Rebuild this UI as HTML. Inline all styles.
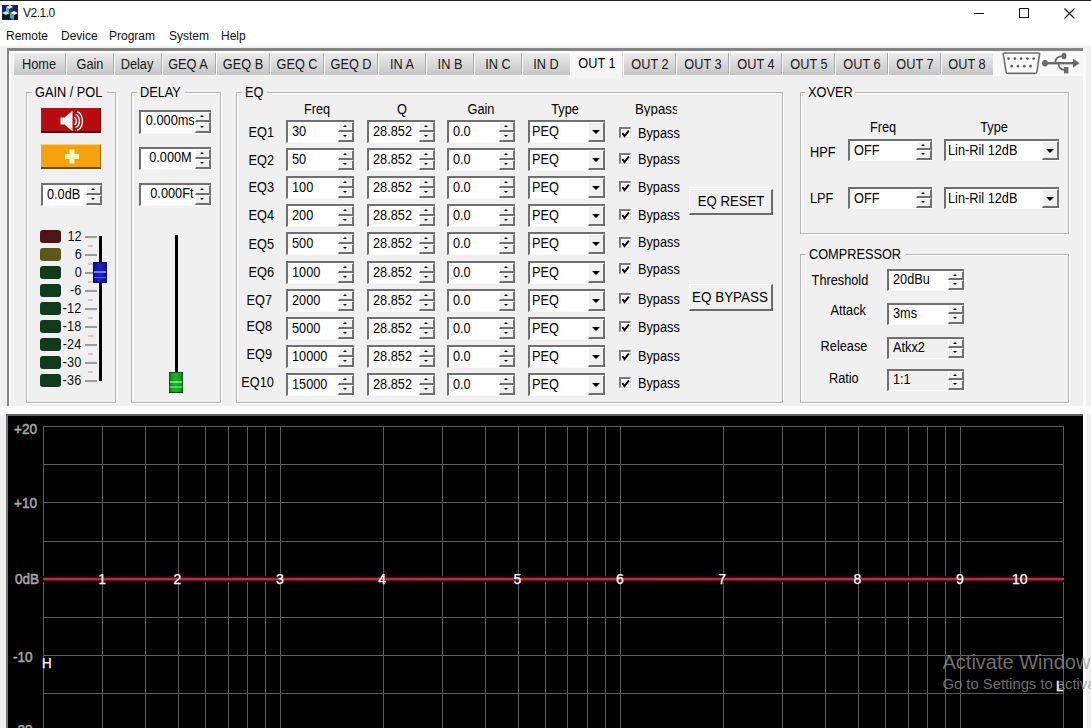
<!DOCTYPE html><html><head><meta charset="utf-8"><style>
html,body{margin:0;padding:0;}
body{width:1091px;height:728px;position:relative;overflow:hidden;background:#f0f0f0;font-family:"Liberation Sans", sans-serif;}
.a{position:absolute;box-sizing:border-box;}
.t{position:absolute;white-space:nowrap;}
.grp{border:1px solid #b4b4b4;box-shadow:inset 1px 1px 0 #fff, 1px 1px 0 #fff;}
.sunk{border-style:solid;border-width:2px;border-color:#7a7a7a #e8e8e8 #e8e8e8 #7a7a7a;}
.rais{background:#f0f0f0;border-style:solid;border-width:1px 2px 2px 1px;border-color:#fff #808080 #808080 #fff;}
.tri-up{width:0;height:0;border-left:2.5px solid transparent;border-right:2.5px solid transparent;border-bottom:2.5px solid #000;}
.sbtn{background:#f0f0f0;border-style:solid;border-width:1px 2px 2px 1px;border-color:#fff #707070 #707070 #fff;}
.tri-dn{width:0;height:0;border-left:2.5px solid transparent;border-right:2.5px solid transparent;border-top:2.5px solid #000;}
.tri-dn2{width:0;height:0;border-left:4px solid transparent;border-right:4px solid transparent;border-top:4.5px solid #000;}
.btn{background:#f0f0f0;border-style:solid;border-width:1px 2px 2px 1px;border-color:#fff #6a6a6a #6a6a6a #fff;}
.chk{background:#fff;border-style:solid;border-width:2px 1px 1px 2px;border-color:#7a7a7a #e0e0e0 #e0e0e0 #7a7a7a;}
</style></head><body>
<div class="a" style="left:0px;top:0px;width:1091px;height:26px;background:#fff;"></div>
<div class="a" style="left:0px;top:0px;width:1091px;height:1px;background:#222;"></div>
<svg class="a" style="left:2px;top:5px" width="16" height="15" viewBox="0 0 16 15">
<rect x="0" y="0" width="16" height="15" fill="#1a1a8a"/>
<polygon points="4,2 8,0 11,2 11,8 7,10 4,8" fill="#1b3b3b"/>
<polygon points="4,2 8,0 11,2 7,4" fill="#cfeeee"/>
<polygon points="4,2 7,4 7,10 4,8" fill="#5fb0b0"/>
<polygon points="0,8 4,6 8,8 8,14 4,15 0,13" fill="#0a1a1a"/>
<polygon points="0,8 4,6 8,8 4,10" fill="#bfe8e8"/>
<polygon points="8,8 12,6 16,8 16,14 12,15 8,13" fill="#0a1a1a"/>
<polygon points="8,8 12,6 16,8 12,10" fill="#e8ffff"/>
<polygon points="8,8 12,10 12,15 8,13" fill="#5aa0a0"/>
</svg>
<div class="t" style="left:23px;top:6.60px;font-size:12px;line-height:12px;color:#111;transform-origin:0 0;letter-spacing:-0.5px;">V2.1.0</div>
<div class="a" style="left:974px;top:13px;width:10px;height:1px;background:#111;"></div>
<div class="a" style="left:1019px;top:8px;width:10px;height:10px;border:1px solid #111;"></div>
<svg class="a" style="left:1064px;top:8px" width="11" height="11" viewBox="0 0 11 11"><path d="M0.5 0.5 L10.5 10.5 M10.5 0.5 L0.5 10.5" stroke="#111" stroke-width="1.1"/></svg>
<div class="a" style="left:0px;top:26px;width:1091px;height:18px;background:#fff;"></div>
<div class="a" style="left:0px;top:44px;width:1091px;height:4px;background:linear-gradient(#fff,#f0f0f0);"></div>
<div class="t" style="left:6px;top:30.10px;font-size:12px;line-height:12px;color:#111;transform-origin:0 0;">Remote</div>
<div class="t" style="left:61px;top:30.10px;font-size:12px;line-height:12px;color:#111;transform-origin:0 0;">Device</div>
<div class="t" style="left:109px;top:30.10px;font-size:12px;line-height:12px;color:#111;transform-origin:0 0;">Program</div>
<div class="t" style="left:169px;top:30.10px;font-size:12px;line-height:12px;color:#111;transform-origin:0 0;">System</div>
<div class="t" style="left:221px;top:30.10px;font-size:12px;line-height:12px;color:#111;transform-origin:0 0;">Help</div>
<div class="a" style="left:7px;top:48px;width:1078px;height:358px;background:#f0f0f0;border-top:3px solid #858585;border-left:2px solid #858585;"></div>
<div class="a" style="left:9px;top:51px;width:1074px;height:2px;background:#fff;"></div>
<div class="a" style="left:9px;top:51px;width:2px;height:355px;background:#fff;"></div>
<div class="a" style="left:1083px;top:48px;width:3px;height:680px;background:#fcfcfc;"></div>
<div class="a" style="left:0px;top:406px;width:1091px;height:8px;background:#fcfcfc;"></div>
<div class="a" style="left:13px;top:53px;width:53px;height:22px;background:linear-gradient(#ececec,#c6c6c6);border-left:1px solid #fff;"></div>
<div class="t" style="left:-61.5px;width:200px;text-align:center;top:56.78px;font-size:14px;line-height:14px;color:#1a1a1a;transform:scaleX(0.91);transform-origin:50% 0;">Home</div>
<div class="a" style="left:66px;top:53px;width:48px;height:22px;background:linear-gradient(#ececec,#c6c6c6);border-left:1px solid #fff;"></div>
<div class="a" style="left:65px;top:53px;width:1px;height:20px;background:#a8a8a8;"></div>
<div class="t" style="left:-10.0px;width:200px;text-align:center;top:56.78px;font-size:14px;line-height:14px;color:#1a1a1a;transform:scaleX(0.91);transform-origin:50% 0;">Gain</div>
<div class="a" style="left:114px;top:53px;width:48px;height:22px;background:linear-gradient(#ececec,#c6c6c6);border-left:1px solid #fff;"></div>
<div class="a" style="left:113px;top:53px;width:1px;height:20px;background:#a8a8a8;"></div>
<div class="t" style="left:37.0px;width:200px;text-align:center;top:56.78px;font-size:14px;line-height:14px;color:#1a1a1a;transform:scaleX(0.91);transform-origin:50% 0;">Delay</div>
<div class="a" style="left:162px;top:53px;width:54px;height:22px;background:linear-gradient(#ececec,#c6c6c6);border-left:1px solid #fff;"></div>
<div class="a" style="left:161px;top:53px;width:1px;height:20px;background:#a8a8a8;"></div>
<div class="t" style="left:88.0px;width:200px;text-align:center;top:56.78px;font-size:14px;line-height:14px;color:#1a1a1a;transform:scaleX(0.91);transform-origin:50% 0;">GEQ A</div>
<div class="a" style="left:216px;top:53px;width:54px;height:22px;background:linear-gradient(#ececec,#c6c6c6);border-left:1px solid #fff;"></div>
<div class="a" style="left:215px;top:53px;width:1px;height:20px;background:#a8a8a8;"></div>
<div class="t" style="left:143.0px;width:200px;text-align:center;top:56.78px;font-size:14px;line-height:14px;color:#1a1a1a;transform:scaleX(0.91);transform-origin:50% 0;">GEQ B</div>
<div class="a" style="left:270px;top:53px;width:54px;height:22px;background:linear-gradient(#ececec,#c6c6c6);border-left:1px solid #fff;"></div>
<div class="a" style="left:269px;top:53px;width:1px;height:20px;background:#a8a8a8;"></div>
<div class="t" style="left:197.0px;width:200px;text-align:center;top:56.78px;font-size:14px;line-height:14px;color:#1a1a1a;transform:scaleX(0.91);transform-origin:50% 0;">GEQ C</div>
<div class="a" style="left:324px;top:53px;width:54px;height:22px;background:linear-gradient(#ececec,#c6c6c6);border-left:1px solid #fff;"></div>
<div class="a" style="left:323px;top:53px;width:1px;height:20px;background:#a8a8a8;"></div>
<div class="t" style="left:251.0px;width:200px;text-align:center;top:56.78px;font-size:14px;line-height:14px;color:#1a1a1a;transform:scaleX(0.91);transform-origin:50% 0;">GEQ D</div>
<div class="a" style="left:378px;top:53px;width:48px;height:22px;background:linear-gradient(#ececec,#c6c6c6);border-left:1px solid #fff;"></div>
<div class="a" style="left:377px;top:53px;width:1px;height:20px;background:#a8a8a8;"></div>
<div class="t" style="left:302.0px;width:200px;text-align:center;top:56.78px;font-size:14px;line-height:14px;color:#1a1a1a;transform:scaleX(0.91);transform-origin:50% 0;">IN A</div>
<div class="a" style="left:426px;top:53px;width:48px;height:22px;background:linear-gradient(#ececec,#c6c6c6);border-left:1px solid #fff;"></div>
<div class="a" style="left:425px;top:53px;width:1px;height:20px;background:#a8a8a8;"></div>
<div class="t" style="left:350.0px;width:200px;text-align:center;top:56.78px;font-size:14px;line-height:14px;color:#1a1a1a;transform:scaleX(0.91);transform-origin:50% 0;">IN B</div>
<div class="a" style="left:474px;top:53px;width:48px;height:22px;background:linear-gradient(#ececec,#c6c6c6);border-left:1px solid #fff;"></div>
<div class="a" style="left:473px;top:53px;width:1px;height:20px;background:#a8a8a8;"></div>
<div class="t" style="left:398.0px;width:200px;text-align:center;top:56.78px;font-size:14px;line-height:14px;color:#1a1a1a;transform:scaleX(0.91);transform-origin:50% 0;">IN C</div>
<div class="a" style="left:522px;top:53px;width:48px;height:22px;background:linear-gradient(#ececec,#c6c6c6);border-left:1px solid #fff;"></div>
<div class="a" style="left:521px;top:53px;width:1px;height:20px;background:#a8a8a8;"></div>
<div class="t" style="left:446.0px;width:200px;text-align:center;top:56.78px;font-size:14px;line-height:14px;color:#1a1a1a;transform:scaleX(0.91);transform-origin:50% 0;">IN D</div>
<div class="a" style="left:570px;top:51px;width:53px;height:27px;background:linear-gradient(#fafafa,#f4f4f4);border-left:1px solid #fff;border-right:1px solid #d8d8d8;"></div>
<div class="t" style="left:496.5px;width:200px;text-align:center;top:55.78px;font-size:14px;line-height:14px;color:#000;transform:scaleX(0.91);transform-origin:50% 0;">OUT 1</div>
<div class="a" style="left:623px;top:53px;width:53px;height:22px;background:linear-gradient(#ececec,#c6c6c6);border-left:1px solid #fff;"></div>
<div class="t" style="left:549.5px;width:200px;text-align:center;top:56.78px;font-size:14px;line-height:14px;color:#1a1a1a;transform:scaleX(0.91);transform-origin:50% 0;">OUT 2</div>
<div class="a" style="left:676px;top:53px;width:53px;height:22px;background:linear-gradient(#ececec,#c6c6c6);border-left:1px solid #fff;"></div>
<div class="a" style="left:675px;top:53px;width:1px;height:20px;background:#a8a8a8;"></div>
<div class="t" style="left:602.5px;width:200px;text-align:center;top:56.78px;font-size:14px;line-height:14px;color:#1a1a1a;transform:scaleX(0.91);transform-origin:50% 0;">OUT 3</div>
<div class="a" style="left:729px;top:53px;width:53px;height:22px;background:linear-gradient(#ececec,#c6c6c6);border-left:1px solid #fff;"></div>
<div class="a" style="left:728px;top:53px;width:1px;height:20px;background:#a8a8a8;"></div>
<div class="t" style="left:655.5px;width:200px;text-align:center;top:56.78px;font-size:14px;line-height:14px;color:#1a1a1a;transform:scaleX(0.91);transform-origin:50% 0;">OUT 4</div>
<div class="a" style="left:782px;top:53px;width:53px;height:22px;background:linear-gradient(#ececec,#c6c6c6);border-left:1px solid #fff;"></div>
<div class="a" style="left:781px;top:53px;width:1px;height:20px;background:#a8a8a8;"></div>
<div class="t" style="left:708.5px;width:200px;text-align:center;top:56.78px;font-size:14px;line-height:14px;color:#1a1a1a;transform:scaleX(0.91);transform-origin:50% 0;">OUT 5</div>
<div class="a" style="left:835px;top:53px;width:53px;height:22px;background:linear-gradient(#ececec,#c6c6c6);border-left:1px solid #fff;"></div>
<div class="a" style="left:834px;top:53px;width:1px;height:20px;background:#a8a8a8;"></div>
<div class="t" style="left:761.5px;width:200px;text-align:center;top:56.78px;font-size:14px;line-height:14px;color:#1a1a1a;transform:scaleX(0.91);transform-origin:50% 0;">OUT 6</div>
<div class="a" style="left:888px;top:53px;width:53px;height:22px;background:linear-gradient(#ececec,#c6c6c6);border-left:1px solid #fff;"></div>
<div class="a" style="left:887px;top:53px;width:1px;height:20px;background:#a8a8a8;"></div>
<div class="t" style="left:814.5px;width:200px;text-align:center;top:56.78px;font-size:14px;line-height:14px;color:#1a1a1a;transform:scaleX(0.91);transform-origin:50% 0;">OUT 7</div>
<div class="a" style="left:941px;top:53px;width:52px;height:22px;background:linear-gradient(#ececec,#c6c6c6);border-left:1px solid #fff;"></div>
<div class="a" style="left:940px;top:53px;width:1px;height:20px;background:#a8a8a8;"></div>
<div class="t" style="left:867.0px;width:200px;text-align:center;top:56.78px;font-size:14px;line-height:14px;color:#1a1a1a;transform:scaleX(0.91);transform-origin:50% 0;">OUT 8</div>
<div class="a" style="left:993px;top:51px;width:90px;height:25px;background:#f8f8f8;"></div>
<svg class="a" style="left:1002px;top:52px" width="40" height="23" viewBox="0 0 40 23">
<path d="M1.2 2 Q1.2 1 2.4 1 L36.6 1 Q37.8 1 37.6 2 L35 19.6 Q34.6 21.4 32.8 21.4 L6.2 21.4 Q4.4 21.4 4 19.6 Z" fill="#f8f8f8" stroke="#707070" stroke-width="1.6"/>
<g fill="#606060"><circle cx="6.6" cy="6.6" r="1.35"/><circle cx="12.9" cy="6.6" r="1.35"/><circle cx="19.1" cy="6.6" r="1.35"/><circle cx="25.4" cy="6.6" r="1.35"/><circle cx="31.7" cy="6.6" r="1.35"/>
<circle cx="9.8" cy="14.2" r="1.35"/><circle cx="16" cy="14.2" r="1.35"/><circle cx="22.3" cy="14.2" r="1.35"/><circle cx="28.6" cy="14.2" r="1.35"/></g>
</svg>
<svg class="a" style="left:1042px;top:52px" width="40" height="23" viewBox="0 0 40 23">
<g fill="#6a6a6a" stroke="#6a6a6a">
<ellipse cx="3" cy="11.2" rx="2.9" ry="3.3" stroke="none"/>
<rect x="4" y="10" width="27" height="2.4" stroke="none"/>
<polygon points="31,6.6 37.6,11.2 31,15.8" stroke="none"/>
<path d="M13.2 11.2 Q13.2 4.6 20 4.2" fill="none" stroke-width="1.8"/>
<ellipse cx="22" cy="4" rx="2.4" ry="3.3" stroke="none"/>
<path d="M16.6 11.2 Q16.6 17.6 22.5 17.8" fill="none" stroke-width="1.8"/>
<rect x="22" y="15" width="4.4" height="6.4" stroke="none"/>
</g></svg>
<div class="a grp" style="left:26px;top:92px;width:90px;height:311px;"></div>
<div class="a" style="left:32px;top:90px;width:75px;height:5px;background:#f0f0f0;"></div>
<div class="t" style="left:35px;top:84.78px;font-size:14px;line-height:14px;color:#000;transform:scaleX(0.91);transform-origin:0 0;">GAIN / POL</div>
<div class="a" style="left:41px;top:108px;width:60px;height:25px;background:#b80c10;border-bottom:2px solid #6a0406;border-right:1px solid #800608;border-left:1px solid #a02020;"></div>
<svg class="a" style="left:59px;top:110px" width="26" height="22" viewBox="0 0 26 22">
<polygon points="1.5,7.5 5.5,7.5 13.5,0.8 13.5,21.2 5.5,14.5 1.5,14.5" fill="#fbfbfb"/>
<g stroke="#fbfbfb" stroke-width="1.4" fill="none">
<path d="M15.2 7.6 A2.2 3.4 0 0 1 15.2 14.4"/>
<path d="M16.6 4.8 A3.8 6.2 0 0 1 16.6 17.2"/>
<path d="M18 2 A5.4 9 0 0 1 18 20"/>
</g></svg>
<div class="a" style="left:41px;top:144px;width:60px;height:25px;background:#f6a20c;border-bottom:2px solid #7a4a08;border-right:1px solid #a86a08;border-top:1px solid #ffd070;"></div>
<svg class="a" style="left:65px;top:149px" width="14" height="15" viewBox="0 0 14 15">
<rect x="4.5" y="0.5" width="5" height="14" fill="#fff6c8"/><rect x="0" y="5" width="14" height="5" fill="#fff6c8"/></svg>
<div class="a" style="left:41px;top:183px;width:61px;height:23px;background:#fff;border-top:2px solid #707070;border-left:2px solid #707070;border-bottom:1px solid #fafafa;"></div>
<div class="a sbtn" style="left:86px;top:185px;width:16px;height:10px;"></div>
<div class="a sbtn" style="left:86px;top:195px;width:16px;height:10px;"></div>
<div class="a tri-up" style="left:91.0px;top:188.0px;"></div>
<div class="a tri-dn" style="left:91.0px;top:198.0px;"></div>
<div class="t" style="left:47px;top:187.08px;font-size:14px;line-height:14px;color:#000;transform:scaleX(0.91);transform-origin:0 0;">0.0dB</div>
<div class="a" style="left:40px;top:230px;width:21px;height:13px;background:#4d1616;border-radius:3px;"></div>
<div class="t" style="right:1009.5px;top:229.28px;font-size:14px;line-height:14px;color:#111;transform:scaleX(0.91);transform-origin:100% 0;">12</div>
<div class="a" style="left:85px;top:236px;width:12px;height:2px;background:#9a9a9a;"></div>
<div class="a" style="left:88px;top:245px;width:5px;height:2px;background:#d8c4c4;"></div>
<div class="a" style="left:40px;top:248px;width:21px;height:13px;background:#5e5818;border-radius:3px;"></div>
<div class="t" style="right:1009.5px;top:247.28px;font-size:14px;line-height:14px;color:#111;transform:scaleX(0.91);transform-origin:100% 0;">6</div>
<div class="a" style="left:85px;top:254px;width:12px;height:2px;background:#9a9a9a;"></div>
<div class="a" style="left:88px;top:263px;width:5px;height:2px;background:#d8c4c4;"></div>
<div class="a" style="left:40px;top:266px;width:21px;height:13px;background:#0f3a1c;border-radius:3px;"></div>
<div class="t" style="right:1009.5px;top:265.28px;font-size:14px;line-height:14px;color:#111;transform:scaleX(0.91);transform-origin:100% 0;">0</div>
<div class="a" style="left:85px;top:272px;width:12px;height:2px;background:#9a9a9a;"></div>
<div class="a" style="left:88px;top:281px;width:5px;height:2px;background:#d8c4c4;"></div>
<div class="a" style="left:40px;top:284px;width:21px;height:13px;background:#0f3a1c;border-radius:3px;"></div>
<div class="t" style="right:1009.5px;top:283.28px;font-size:14px;line-height:14px;color:#111;transform:scaleX(0.91);transform-origin:100% 0;">-6</div>
<div class="a" style="left:85px;top:290px;width:12px;height:2px;background:#9a9a9a;"></div>
<div class="a" style="left:88px;top:299px;width:5px;height:2px;background:#d8c4c4;"></div>
<div class="a" style="left:40px;top:302px;width:21px;height:13px;background:#0f3a1c;border-radius:3px;"></div>
<div class="t" style="right:1009.5px;top:301.28px;font-size:14px;line-height:14px;color:#111;transform:scaleX(0.91);transform-origin:100% 0;">-12</div>
<div class="a" style="left:85px;top:308px;width:12px;height:2px;background:#9a9a9a;"></div>
<div class="a" style="left:88px;top:317px;width:5px;height:2px;background:#d8c4c4;"></div>
<div class="a" style="left:40px;top:320px;width:21px;height:13px;background:#0f3a1c;border-radius:3px;"></div>
<div class="t" style="right:1009.5px;top:319.28px;font-size:14px;line-height:14px;color:#111;transform:scaleX(0.91);transform-origin:100% 0;">-18</div>
<div class="a" style="left:85px;top:326px;width:12px;height:2px;background:#9a9a9a;"></div>
<div class="a" style="left:88px;top:335px;width:5px;height:2px;background:#d8c4c4;"></div>
<div class="a" style="left:40px;top:338px;width:21px;height:13px;background:#0f3a1c;border-radius:3px;"></div>
<div class="t" style="right:1009.5px;top:337.28px;font-size:14px;line-height:14px;color:#111;transform:scaleX(0.91);transform-origin:100% 0;">-24</div>
<div class="a" style="left:85px;top:344px;width:12px;height:2px;background:#9a9a9a;"></div>
<div class="a" style="left:88px;top:353px;width:5px;height:2px;background:#d8c4c4;"></div>
<div class="a" style="left:40px;top:356px;width:21px;height:13px;background:#0f3a1c;border-radius:3px;"></div>
<div class="t" style="right:1009.5px;top:355.28px;font-size:14px;line-height:14px;color:#111;transform:scaleX(0.91);transform-origin:100% 0;">-30</div>
<div class="a" style="left:85px;top:362px;width:12px;height:2px;background:#9a9a9a;"></div>
<div class="a" style="left:88px;top:371px;width:5px;height:2px;background:#d8c4c4;"></div>
<div class="a" style="left:40px;top:374px;width:21px;height:13px;background:#0f3a1c;border-radius:3px;"></div>
<div class="t" style="right:1009.5px;top:373.28px;font-size:14px;line-height:14px;color:#111;transform:scaleX(0.91);transform-origin:100% 0;">-36</div>
<div class="a" style="left:85px;top:380px;width:12px;height:2px;background:#9a9a9a;"></div>
<div class="a" style="left:99px;top:236px;width:3px;height:145px;background:#000;"></div>
<div class="a" style="left:93px;top:262px;width:14px;height:21px;background:linear-gradient(90deg,#1212a0,#1e1ec4 50%,#1212a0);border:1px solid #000860;"></div>
<div class="a" style="left:94px;top:271px;width:12px;height:2px;background:#7080ff;"></div>
<div class="a" style="left:94px;top:277px;width:12px;height:1px;background:#5060e8;"></div>
<div class="a grp" style="left:131px;top:92px;width:90px;height:311px;"></div>
<div class="a" style="left:137px;top:90px;width:48px;height:5px;background:#f0f0f0;"></div>
<div class="t" style="left:140px;top:84.78px;font-size:14px;line-height:14px;color:#000;transform:scaleX(0.91);transform-origin:0 0;">DELAY</div>
<div class="a" style="left:139px;top:110px;width:72px;height:24px;background:#fff;border-top:2px solid #707070;border-left:2px solid #707070;border-bottom:1px solid #fafafa;"></div>
<div class="a sbtn" style="left:195px;top:112px;width:16px;height:10px;"></div>
<div class="a sbtn" style="left:195px;top:122px;width:16px;height:11px;"></div>
<div class="a tri-up" style="left:200.0px;top:115.0px;"></div>
<div class="a tri-dn" style="left:200.0px;top:125.5px;"></div>
<div class="t" style="right:896.5px;top:113.08px;font-size:14px;line-height:14px;color:#000;transform:scaleX(0.91);transform-origin:100% 0;">0.000ms</div>
<div class="a" style="left:139px;top:147px;width:72px;height:23px;background:#fff;border-top:2px solid #707070;border-left:2px solid #707070;border-bottom:1px solid #fafafa;"></div>
<div class="a sbtn" style="left:195px;top:149px;width:16px;height:10px;"></div>
<div class="a sbtn" style="left:195px;top:159px;width:16px;height:10px;"></div>
<div class="a tri-up" style="left:200.0px;top:152.0px;"></div>
<div class="a tri-dn" style="left:200.0px;top:162.0px;"></div>
<div class="t" style="right:899px;top:149.98px;font-size:14px;line-height:14px;color:#000;transform:scaleX(0.91);transform-origin:100% 0;">0.000M</div>
<div class="a" style="left:139px;top:183px;width:72px;height:23px;background:#fff;border-top:2px solid #707070;border-left:2px solid #707070;border-bottom:1px solid #fafafa;"></div>
<div class="a sbtn" style="left:195px;top:185px;width:16px;height:10px;"></div>
<div class="a sbtn" style="left:195px;top:195px;width:16px;height:10px;"></div>
<div class="a tri-up" style="left:200.0px;top:188.0px;"></div>
<div class="a tri-dn" style="left:200.0px;top:198.0px;"></div>
<div class="t" style="right:898px;top:186.28px;font-size:14px;line-height:14px;color:#000;transform:scaleX(0.91);transform-origin:100% 0;">0.000Ft</div>
<div class="a" style="left:175px;top:235px;width:3px;height:140px;background:#000;"></div>
<div class="a" style="left:169px;top:372px;width:14px;height:21px;background:linear-gradient(90deg,#0e8a1a,#1cb82c 50%,#0e8a1a);border:1px solid #05500c;"></div>
<div class="a" style="left:170px;top:381px;width:12px;height:2px;background:#58e868;"></div>
<div class="a" style="left:170px;top:386px;width:12px;height:2px;background:#48d858;"></div>
<div class="a grp" style="left:236px;top:92px;width:547px;height:311px;"></div>
<div class="a" style="left:242px;top:90px;width:25px;height:5px;background:#f0f0f0;"></div>
<div class="t" style="left:245px;top:84.78px;font-size:14px;line-height:14px;color:#000;transform:scaleX(0.91);transform-origin:0 0;">EQ</div>
<div class="t" style="left:217px;width:200px;text-align:center;top:101.78px;font-size:14px;line-height:14px;color:#000;transform:scaleX(0.91);transform-origin:50% 0;">Freq</div>
<div class="t" style="left:302px;width:200px;text-align:center;top:101.78px;font-size:14px;line-height:14px;color:#000;transform:scaleX(0.91);transform-origin:50% 0;">Q</div>
<div class="t" style="left:381px;width:200px;text-align:center;top:101.78px;font-size:14px;line-height:14px;color:#000;transform:scaleX(0.91);transform-origin:50% 0;">Gain</div>
<div class="t" style="left:464.5px;width:200px;text-align:center;top:101.78px;font-size:14px;line-height:14px;color:#000;transform:scaleX(0.91);transform-origin:50% 0;">Type</div>
<div class="t" style="left:635px;top:101.78px;font-size:14px;line-height:14px;width:44.2px;overflow:hidden;transform:scaleX(0.95);transform-origin:0 0;">Bypass</div>
<div class="t" style="right:817px;top:125.08px;font-size:14px;line-height:14px;color:#000;transform:scaleX(0.91);transform-origin:100% 0;">EQ1</div>
<div class="a" style="left:286px;top:120px;width:68px;height:23px;background:#fff;border-top:2px solid #707070;border-left:2px solid #707070;border-bottom:1px solid #fafafa;"></div>
<div class="a sbtn" style="left:338px;top:122px;width:16px;height:10px;"></div>
<div class="a sbtn" style="left:338px;top:132px;width:16px;height:10px;"></div>
<div class="a tri-up" style="left:343.0px;top:125.0px;"></div>
<div class="a tri-dn" style="left:343.0px;top:135.0px;"></div>
<div class="t" style="left:292px;top:123.78px;font-size:14px;line-height:14px;color:#000;transform:scaleX(0.91);transform-origin:0 0;">30</div>
<div class="a" style="left:367px;top:120px;width:68px;height:23px;background:#fff;border-top:2px solid #707070;border-left:2px solid #707070;border-bottom:1px solid #fafafa;"></div>
<div class="a sbtn" style="left:419px;top:122px;width:16px;height:10px;"></div>
<div class="a sbtn" style="left:419px;top:132px;width:16px;height:10px;"></div>
<div class="a tri-up" style="left:424.0px;top:125.0px;"></div>
<div class="a tri-dn" style="left:424.0px;top:135.0px;"></div>
<div class="t" style="left:373px;top:123.78px;font-size:14px;line-height:14px;color:#000;transform:scaleX(0.91);transform-origin:0 0;">28.852</div>
<div class="a" style="left:447px;top:120px;width:68px;height:23px;background:#fff;border-top:2px solid #707070;border-left:2px solid #707070;border-bottom:1px solid #fafafa;"></div>
<div class="a sbtn" style="left:499px;top:122px;width:16px;height:10px;"></div>
<div class="a sbtn" style="left:499px;top:132px;width:16px;height:10px;"></div>
<div class="a tri-up" style="left:504.0px;top:125.0px;"></div>
<div class="a tri-dn" style="left:504.0px;top:135.0px;"></div>
<div class="t" style="left:453px;top:123.78px;font-size:14px;line-height:14px;color:#000;transform:scaleX(0.91);transform-origin:0 0;">0.0</div>
<div class="a" style="left:528px;top:120px;width:77px;height:23px;background:#fff;border-top:2px solid #707070;border-left:2px solid #707070;border-bottom:1px solid #fafafa;"></div>
<div class="a sbtn" style="left:588px;top:122px;width:17px;height:20px;"></div>
<div class="a tri-dn2" style="left:592.0px;top:130.0px;"></div>
<div class="t" style="left:532px;top:123.78px;font-size:14px;line-height:14px;color:#000;transform:scaleX(0.91);transform-origin:0 0;">PEQ</div>
<div class="a chk" style="left:619px;top:127px;width:12px;height:11px;"></div>
<svg class="a" style="left:620px;top:127px" width="11" height="11" viewBox="0 0 11 11"><path d="M2.4 6.2 L4.5 9 L8.8 3.6" stroke="#000" stroke-width="2" fill="none"/></svg>
<div class="t" style="left:637.5px;top:126.08px;font-size:14px;line-height:14px;color:#000;transform:scaleX(0.91);transform-origin:0 0;">Bypass</div>
<div class="t" style="right:817px;top:152.98px;font-size:14px;line-height:14px;color:#000;transform:scaleX(0.91);transform-origin:100% 0;">EQ2</div>
<div class="a" style="left:286px;top:148px;width:68px;height:23px;background:#fff;border-top:2px solid #707070;border-left:2px solid #707070;border-bottom:1px solid #fafafa;"></div>
<div class="a sbtn" style="left:338px;top:150px;width:16px;height:10px;"></div>
<div class="a sbtn" style="left:338px;top:160px;width:16px;height:10px;"></div>
<div class="a tri-up" style="left:343.0px;top:153.0px;"></div>
<div class="a tri-dn" style="left:343.0px;top:163.0px;"></div>
<div class="t" style="left:292px;top:151.78px;font-size:14px;line-height:14px;color:#000;transform:scaleX(0.91);transform-origin:0 0;">50</div>
<div class="a" style="left:367px;top:148px;width:68px;height:23px;background:#fff;border-top:2px solid #707070;border-left:2px solid #707070;border-bottom:1px solid #fafafa;"></div>
<div class="a sbtn" style="left:419px;top:150px;width:16px;height:10px;"></div>
<div class="a sbtn" style="left:419px;top:160px;width:16px;height:10px;"></div>
<div class="a tri-up" style="left:424.0px;top:153.0px;"></div>
<div class="a tri-dn" style="left:424.0px;top:163.0px;"></div>
<div class="t" style="left:373px;top:151.78px;font-size:14px;line-height:14px;color:#000;transform:scaleX(0.91);transform-origin:0 0;">28.852</div>
<div class="a" style="left:447px;top:148px;width:68px;height:23px;background:#fff;border-top:2px solid #707070;border-left:2px solid #707070;border-bottom:1px solid #fafafa;"></div>
<div class="a sbtn" style="left:499px;top:150px;width:16px;height:10px;"></div>
<div class="a sbtn" style="left:499px;top:160px;width:16px;height:10px;"></div>
<div class="a tri-up" style="left:504.0px;top:153.0px;"></div>
<div class="a tri-dn" style="left:504.0px;top:163.0px;"></div>
<div class="t" style="left:453px;top:151.78px;font-size:14px;line-height:14px;color:#000;transform:scaleX(0.91);transform-origin:0 0;">0.0</div>
<div class="a" style="left:528px;top:148px;width:77px;height:23px;background:#fff;border-top:2px solid #707070;border-left:2px solid #707070;border-bottom:1px solid #fafafa;"></div>
<div class="a sbtn" style="left:588px;top:150px;width:17px;height:20px;"></div>
<div class="a tri-dn2" style="left:592.0px;top:158.0px;"></div>
<div class="t" style="left:532px;top:151.78px;font-size:14px;line-height:14px;color:#000;transform:scaleX(0.91);transform-origin:0 0;">PEQ</div>
<div class="a chk" style="left:619px;top:153px;width:12px;height:11px;"></div>
<svg class="a" style="left:620px;top:153px" width="11" height="11" viewBox="0 0 11 11"><path d="M2.4 6.2 L4.5 9 L8.8 3.6" stroke="#000" stroke-width="2" fill="none"/></svg>
<div class="t" style="left:637.5px;top:152.18px;font-size:14px;line-height:14px;color:#000;transform:scaleX(0.91);transform-origin:0 0;">Bypass</div>
<div class="t" style="right:817px;top:179.78px;font-size:14px;line-height:14px;color:#000;transform:scaleX(0.91);transform-origin:100% 0;">EQ3</div>
<div class="a" style="left:286px;top:176px;width:68px;height:23px;background:#fff;border-top:2px solid #707070;border-left:2px solid #707070;border-bottom:1px solid #fafafa;"></div>
<div class="a sbtn" style="left:338px;top:178px;width:16px;height:10px;"></div>
<div class="a sbtn" style="left:338px;top:188px;width:16px;height:10px;"></div>
<div class="a tri-up" style="left:343.0px;top:181.0px;"></div>
<div class="a tri-dn" style="left:343.0px;top:191.0px;"></div>
<div class="t" style="left:292px;top:179.78px;font-size:14px;line-height:14px;color:#000;transform:scaleX(0.91);transform-origin:0 0;">100</div>
<div class="a" style="left:367px;top:176px;width:68px;height:23px;background:#fff;border-top:2px solid #707070;border-left:2px solid #707070;border-bottom:1px solid #fafafa;"></div>
<div class="a sbtn" style="left:419px;top:178px;width:16px;height:10px;"></div>
<div class="a sbtn" style="left:419px;top:188px;width:16px;height:10px;"></div>
<div class="a tri-up" style="left:424.0px;top:181.0px;"></div>
<div class="a tri-dn" style="left:424.0px;top:191.0px;"></div>
<div class="t" style="left:373px;top:179.78px;font-size:14px;line-height:14px;color:#000;transform:scaleX(0.91);transform-origin:0 0;">28.852</div>
<div class="a" style="left:447px;top:176px;width:68px;height:23px;background:#fff;border-top:2px solid #707070;border-left:2px solid #707070;border-bottom:1px solid #fafafa;"></div>
<div class="a sbtn" style="left:499px;top:178px;width:16px;height:10px;"></div>
<div class="a sbtn" style="left:499px;top:188px;width:16px;height:10px;"></div>
<div class="a tri-up" style="left:504.0px;top:181.0px;"></div>
<div class="a tri-dn" style="left:504.0px;top:191.0px;"></div>
<div class="t" style="left:453px;top:179.78px;font-size:14px;line-height:14px;color:#000;transform:scaleX(0.91);transform-origin:0 0;">0.0</div>
<div class="a" style="left:528px;top:176px;width:77px;height:23px;background:#fff;border-top:2px solid #707070;border-left:2px solid #707070;border-bottom:1px solid #fafafa;"></div>
<div class="a sbtn" style="left:588px;top:178px;width:17px;height:20px;"></div>
<div class="a tri-dn2" style="left:592.0px;top:186.0px;"></div>
<div class="t" style="left:532px;top:179.78px;font-size:14px;line-height:14px;color:#000;transform:scaleX(0.91);transform-origin:0 0;">PEQ</div>
<div class="a chk" style="left:619px;top:181px;width:12px;height:11px;"></div>
<svg class="a" style="left:620px;top:181px" width="11" height="11" viewBox="0 0 11 11"><path d="M2.4 6.2 L4.5 9 L8.8 3.6" stroke="#000" stroke-width="2" fill="none"/></svg>
<div class="t" style="left:637.5px;top:180.08px;font-size:14px;line-height:14px;color:#000;transform:scaleX(0.91);transform-origin:0 0;">Bypass</div>
<div class="t" style="right:817px;top:207.78px;font-size:14px;line-height:14px;color:#000;transform:scaleX(0.91);transform-origin:100% 0;">EQ4</div>
<div class="a" style="left:286px;top:204px;width:68px;height:23px;background:#fff;border-top:2px solid #707070;border-left:2px solid #707070;border-bottom:1px solid #fafafa;"></div>
<div class="a sbtn" style="left:338px;top:206px;width:16px;height:10px;"></div>
<div class="a sbtn" style="left:338px;top:216px;width:16px;height:10px;"></div>
<div class="a tri-up" style="left:343.0px;top:209.0px;"></div>
<div class="a tri-dn" style="left:343.0px;top:219.0px;"></div>
<div class="t" style="left:292px;top:207.78px;font-size:14px;line-height:14px;color:#000;transform:scaleX(0.91);transform-origin:0 0;">200</div>
<div class="a" style="left:367px;top:204px;width:68px;height:23px;background:#fff;border-top:2px solid #707070;border-left:2px solid #707070;border-bottom:1px solid #fafafa;"></div>
<div class="a sbtn" style="left:419px;top:206px;width:16px;height:10px;"></div>
<div class="a sbtn" style="left:419px;top:216px;width:16px;height:10px;"></div>
<div class="a tri-up" style="left:424.0px;top:209.0px;"></div>
<div class="a tri-dn" style="left:424.0px;top:219.0px;"></div>
<div class="t" style="left:373px;top:207.78px;font-size:14px;line-height:14px;color:#000;transform:scaleX(0.91);transform-origin:0 0;">28.852</div>
<div class="a" style="left:447px;top:204px;width:68px;height:23px;background:#fff;border-top:2px solid #707070;border-left:2px solid #707070;border-bottom:1px solid #fafafa;"></div>
<div class="a sbtn" style="left:499px;top:206px;width:16px;height:10px;"></div>
<div class="a sbtn" style="left:499px;top:216px;width:16px;height:10px;"></div>
<div class="a tri-up" style="left:504.0px;top:209.0px;"></div>
<div class="a tri-dn" style="left:504.0px;top:219.0px;"></div>
<div class="t" style="left:453px;top:207.78px;font-size:14px;line-height:14px;color:#000;transform:scaleX(0.91);transform-origin:0 0;">0.0</div>
<div class="a" style="left:528px;top:204px;width:77px;height:23px;background:#fff;border-top:2px solid #707070;border-left:2px solid #707070;border-bottom:1px solid #fafafa;"></div>
<div class="a sbtn" style="left:588px;top:206px;width:17px;height:20px;"></div>
<div class="a tri-dn2" style="left:592.0px;top:214.0px;"></div>
<div class="t" style="left:532px;top:207.78px;font-size:14px;line-height:14px;color:#000;transform:scaleX(0.91);transform-origin:0 0;">PEQ</div>
<div class="a chk" style="left:619px;top:209px;width:12px;height:11px;"></div>
<svg class="a" style="left:620px;top:209px" width="11" height="11" viewBox="0 0 11 11"><path d="M2.4 6.2 L4.5 9 L8.8 3.6" stroke="#000" stroke-width="2" fill="none"/></svg>
<div class="t" style="left:637.5px;top:207.78px;font-size:14px;line-height:14px;color:#000;transform:scaleX(0.91);transform-origin:0 0;">Bypass</div>
<div class="t" style="right:817px;top:236.58px;font-size:14px;line-height:14px;color:#000;transform:scaleX(0.91);transform-origin:100% 0;">EQ5</div>
<div class="a" style="left:286px;top:232px;width:68px;height:23px;background:#fff;border-top:2px solid #707070;border-left:2px solid #707070;border-bottom:1px solid #fafafa;"></div>
<div class="a sbtn" style="left:338px;top:234px;width:16px;height:10px;"></div>
<div class="a sbtn" style="left:338px;top:244px;width:16px;height:10px;"></div>
<div class="a tri-up" style="left:343.0px;top:237.0px;"></div>
<div class="a tri-dn" style="left:343.0px;top:247.0px;"></div>
<div class="t" style="left:292px;top:235.78px;font-size:14px;line-height:14px;color:#000;transform:scaleX(0.91);transform-origin:0 0;">500</div>
<div class="a" style="left:367px;top:232px;width:68px;height:23px;background:#fff;border-top:2px solid #707070;border-left:2px solid #707070;border-bottom:1px solid #fafafa;"></div>
<div class="a sbtn" style="left:419px;top:234px;width:16px;height:10px;"></div>
<div class="a sbtn" style="left:419px;top:244px;width:16px;height:10px;"></div>
<div class="a tri-up" style="left:424.0px;top:237.0px;"></div>
<div class="a tri-dn" style="left:424.0px;top:247.0px;"></div>
<div class="t" style="left:373px;top:235.78px;font-size:14px;line-height:14px;color:#000;transform:scaleX(0.91);transform-origin:0 0;">28.852</div>
<div class="a" style="left:447px;top:232px;width:68px;height:23px;background:#fff;border-top:2px solid #707070;border-left:2px solid #707070;border-bottom:1px solid #fafafa;"></div>
<div class="a sbtn" style="left:499px;top:234px;width:16px;height:10px;"></div>
<div class="a sbtn" style="left:499px;top:244px;width:16px;height:10px;"></div>
<div class="a tri-up" style="left:504.0px;top:237.0px;"></div>
<div class="a tri-dn" style="left:504.0px;top:247.0px;"></div>
<div class="t" style="left:453px;top:235.78px;font-size:14px;line-height:14px;color:#000;transform:scaleX(0.91);transform-origin:0 0;">0.0</div>
<div class="a" style="left:528px;top:232px;width:77px;height:23px;background:#fff;border-top:2px solid #707070;border-left:2px solid #707070;border-bottom:1px solid #fafafa;"></div>
<div class="a sbtn" style="left:588px;top:234px;width:17px;height:20px;"></div>
<div class="a tri-dn2" style="left:592.0px;top:242.0px;"></div>
<div class="t" style="left:532px;top:235.78px;font-size:14px;line-height:14px;color:#000;transform:scaleX(0.91);transform-origin:0 0;">PEQ</div>
<div class="a chk" style="left:619px;top:237px;width:12px;height:11px;"></div>
<svg class="a" style="left:620px;top:237px" width="11" height="11" viewBox="0 0 11 11"><path d="M2.4 6.2 L4.5 9 L8.8 3.6" stroke="#000" stroke-width="2" fill="none"/></svg>
<div class="t" style="left:637.5px;top:235.48px;font-size:14px;line-height:14px;color:#000;transform:scaleX(0.91);transform-origin:0 0;">Bypass</div>
<div class="t" style="right:817px;top:264.98px;font-size:14px;line-height:14px;color:#000;transform:scaleX(0.91);transform-origin:100% 0;">EQ6</div>
<div class="a" style="left:286px;top:261px;width:68px;height:23px;background:#fff;border-top:2px solid #707070;border-left:2px solid #707070;border-bottom:1px solid #fafafa;"></div>
<div class="a sbtn" style="left:338px;top:263px;width:16px;height:10px;"></div>
<div class="a sbtn" style="left:338px;top:273px;width:16px;height:10px;"></div>
<div class="a tri-up" style="left:343.0px;top:266.0px;"></div>
<div class="a tri-dn" style="left:343.0px;top:276.0px;"></div>
<div class="t" style="left:292px;top:264.78px;font-size:14px;line-height:14px;color:#000;transform:scaleX(0.91);transform-origin:0 0;">1000</div>
<div class="a" style="left:367px;top:261px;width:68px;height:23px;background:#fff;border-top:2px solid #707070;border-left:2px solid #707070;border-bottom:1px solid #fafafa;"></div>
<div class="a sbtn" style="left:419px;top:263px;width:16px;height:10px;"></div>
<div class="a sbtn" style="left:419px;top:273px;width:16px;height:10px;"></div>
<div class="a tri-up" style="left:424.0px;top:266.0px;"></div>
<div class="a tri-dn" style="left:424.0px;top:276.0px;"></div>
<div class="t" style="left:373px;top:264.78px;font-size:14px;line-height:14px;color:#000;transform:scaleX(0.91);transform-origin:0 0;">28.852</div>
<div class="a" style="left:447px;top:261px;width:68px;height:23px;background:#fff;border-top:2px solid #707070;border-left:2px solid #707070;border-bottom:1px solid #fafafa;"></div>
<div class="a sbtn" style="left:499px;top:263px;width:16px;height:10px;"></div>
<div class="a sbtn" style="left:499px;top:273px;width:16px;height:10px;"></div>
<div class="a tri-up" style="left:504.0px;top:266.0px;"></div>
<div class="a tri-dn" style="left:504.0px;top:276.0px;"></div>
<div class="t" style="left:453px;top:264.78px;font-size:14px;line-height:14px;color:#000;transform:scaleX(0.91);transform-origin:0 0;">0.0</div>
<div class="a" style="left:528px;top:261px;width:77px;height:23px;background:#fff;border-top:2px solid #707070;border-left:2px solid #707070;border-bottom:1px solid #fafafa;"></div>
<div class="a sbtn" style="left:588px;top:263px;width:17px;height:20px;"></div>
<div class="a tri-dn2" style="left:592.0px;top:271.0px;"></div>
<div class="t" style="left:532px;top:264.78px;font-size:14px;line-height:14px;color:#000;transform:scaleX(0.91);transform-origin:0 0;">PEQ</div>
<div class="a chk" style="left:619px;top:263px;width:12px;height:11px;"></div>
<svg class="a" style="left:620px;top:263px" width="11" height="11" viewBox="0 0 11 11"><path d="M2.4 6.2 L4.5 9 L8.8 3.6" stroke="#000" stroke-width="2" fill="none"/></svg>
<div class="t" style="left:637.5px;top:262.18px;font-size:14px;line-height:14px;color:#000;transform:scaleX(0.91);transform-origin:0 0;">Bypass</div>
<div class="t" style="right:819.4px;top:292.78px;font-size:14px;line-height:14px;color:#000;transform:scaleX(0.91);transform-origin:100% 0;">EQ7</div>
<div class="a" style="left:286px;top:289px;width:68px;height:23px;background:#fff;border-top:2px solid #707070;border-left:2px solid #707070;border-bottom:1px solid #fafafa;"></div>
<div class="a sbtn" style="left:338px;top:291px;width:16px;height:10px;"></div>
<div class="a sbtn" style="left:338px;top:301px;width:16px;height:10px;"></div>
<div class="a tri-up" style="left:343.0px;top:294.0px;"></div>
<div class="a tri-dn" style="left:343.0px;top:304.0px;"></div>
<div class="t" style="left:292px;top:292.78px;font-size:14px;line-height:14px;color:#000;transform:scaleX(0.91);transform-origin:0 0;">2000</div>
<div class="a" style="left:367px;top:289px;width:68px;height:23px;background:#fff;border-top:2px solid #707070;border-left:2px solid #707070;border-bottom:1px solid #fafafa;"></div>
<div class="a sbtn" style="left:419px;top:291px;width:16px;height:10px;"></div>
<div class="a sbtn" style="left:419px;top:301px;width:16px;height:10px;"></div>
<div class="a tri-up" style="left:424.0px;top:294.0px;"></div>
<div class="a tri-dn" style="left:424.0px;top:304.0px;"></div>
<div class="t" style="left:373px;top:292.78px;font-size:14px;line-height:14px;color:#000;transform:scaleX(0.91);transform-origin:0 0;">28.852</div>
<div class="a" style="left:447px;top:289px;width:68px;height:23px;background:#fff;border-top:2px solid #707070;border-left:2px solid #707070;border-bottom:1px solid #fafafa;"></div>
<div class="a sbtn" style="left:499px;top:291px;width:16px;height:10px;"></div>
<div class="a sbtn" style="left:499px;top:301px;width:16px;height:10px;"></div>
<div class="a tri-up" style="left:504.0px;top:294.0px;"></div>
<div class="a tri-dn" style="left:504.0px;top:304.0px;"></div>
<div class="t" style="left:453px;top:292.78px;font-size:14px;line-height:14px;color:#000;transform:scaleX(0.91);transform-origin:0 0;">0.0</div>
<div class="a" style="left:528px;top:289px;width:77px;height:23px;background:#fff;border-top:2px solid #707070;border-left:2px solid #707070;border-bottom:1px solid #fafafa;"></div>
<div class="a sbtn" style="left:588px;top:291px;width:17px;height:20px;"></div>
<div class="a tri-dn2" style="left:592.0px;top:299.0px;"></div>
<div class="t" style="left:532px;top:292.78px;font-size:14px;line-height:14px;color:#000;transform:scaleX(0.91);transform-origin:0 0;">PEQ</div>
<div class="a chk" style="left:619px;top:293px;width:12px;height:11px;"></div>
<svg class="a" style="left:620px;top:293px" width="11" height="11" viewBox="0 0 11 11"><path d="M2.4 6.2 L4.5 9 L8.8 3.6" stroke="#000" stroke-width="2" fill="none"/></svg>
<div class="t" style="left:637.5px;top:291.78px;font-size:14px;line-height:14px;color:#000;transform:scaleX(0.91);transform-origin:0 0;">Bypass</div>
<div class="t" style="right:819.4px;top:319.48px;font-size:14px;line-height:14px;color:#000;transform:scaleX(0.91);transform-origin:100% 0;">EQ8</div>
<div class="a" style="left:286px;top:317px;width:68px;height:23px;background:#fff;border-top:2px solid #707070;border-left:2px solid #707070;border-bottom:1px solid #fafafa;"></div>
<div class="a sbtn" style="left:338px;top:319px;width:16px;height:10px;"></div>
<div class="a sbtn" style="left:338px;top:329px;width:16px;height:10px;"></div>
<div class="a tri-up" style="left:343.0px;top:322.0px;"></div>
<div class="a tri-dn" style="left:343.0px;top:332.0px;"></div>
<div class="t" style="left:292px;top:320.78px;font-size:14px;line-height:14px;color:#000;transform:scaleX(0.91);transform-origin:0 0;">5000</div>
<div class="a" style="left:367px;top:317px;width:68px;height:23px;background:#fff;border-top:2px solid #707070;border-left:2px solid #707070;border-bottom:1px solid #fafafa;"></div>
<div class="a sbtn" style="left:419px;top:319px;width:16px;height:10px;"></div>
<div class="a sbtn" style="left:419px;top:329px;width:16px;height:10px;"></div>
<div class="a tri-up" style="left:424.0px;top:322.0px;"></div>
<div class="a tri-dn" style="left:424.0px;top:332.0px;"></div>
<div class="t" style="left:373px;top:320.78px;font-size:14px;line-height:14px;color:#000;transform:scaleX(0.91);transform-origin:0 0;">28.852</div>
<div class="a" style="left:447px;top:317px;width:68px;height:23px;background:#fff;border-top:2px solid #707070;border-left:2px solid #707070;border-bottom:1px solid #fafafa;"></div>
<div class="a sbtn" style="left:499px;top:319px;width:16px;height:10px;"></div>
<div class="a sbtn" style="left:499px;top:329px;width:16px;height:10px;"></div>
<div class="a tri-up" style="left:504.0px;top:322.0px;"></div>
<div class="a tri-dn" style="left:504.0px;top:332.0px;"></div>
<div class="t" style="left:453px;top:320.78px;font-size:14px;line-height:14px;color:#000;transform:scaleX(0.91);transform-origin:0 0;">0.0</div>
<div class="a" style="left:528px;top:317px;width:77px;height:23px;background:#fff;border-top:2px solid #707070;border-left:2px solid #707070;border-bottom:1px solid #fafafa;"></div>
<div class="a sbtn" style="left:588px;top:319px;width:17px;height:20px;"></div>
<div class="a tri-dn2" style="left:592.0px;top:327.0px;"></div>
<div class="t" style="left:532px;top:320.78px;font-size:14px;line-height:14px;color:#000;transform:scaleX(0.91);transform-origin:0 0;">PEQ</div>
<div class="a chk" style="left:619px;top:321px;width:12px;height:11px;"></div>
<svg class="a" style="left:620px;top:321px" width="11" height="11" viewBox="0 0 11 11"><path d="M2.4 6.2 L4.5 9 L8.8 3.6" stroke="#000" stroke-width="2" fill="none"/></svg>
<div class="t" style="left:637.5px;top:320.18px;font-size:14px;line-height:14px;color:#000;transform:scaleX(0.91);transform-origin:0 0;">Bypass</div>
<div class="t" style="right:819.4px;top:347.18px;font-size:14px;line-height:14px;color:#000;transform:scaleX(0.91);transform-origin:100% 0;">EQ9</div>
<div class="a" style="left:286px;top:345px;width:68px;height:23px;background:#fff;border-top:2px solid #707070;border-left:2px solid #707070;border-bottom:1px solid #fafafa;"></div>
<div class="a sbtn" style="left:338px;top:347px;width:16px;height:10px;"></div>
<div class="a sbtn" style="left:338px;top:357px;width:16px;height:10px;"></div>
<div class="a tri-up" style="left:343.0px;top:350.0px;"></div>
<div class="a tri-dn" style="left:343.0px;top:360.0px;"></div>
<div class="t" style="left:292px;top:348.78px;font-size:14px;line-height:14px;color:#000;transform:scaleX(0.91);transform-origin:0 0;">10000</div>
<div class="a" style="left:367px;top:345px;width:68px;height:23px;background:#fff;border-top:2px solid #707070;border-left:2px solid #707070;border-bottom:1px solid #fafafa;"></div>
<div class="a sbtn" style="left:419px;top:347px;width:16px;height:10px;"></div>
<div class="a sbtn" style="left:419px;top:357px;width:16px;height:10px;"></div>
<div class="a tri-up" style="left:424.0px;top:350.0px;"></div>
<div class="a tri-dn" style="left:424.0px;top:360.0px;"></div>
<div class="t" style="left:373px;top:348.78px;font-size:14px;line-height:14px;color:#000;transform:scaleX(0.91);transform-origin:0 0;">28.852</div>
<div class="a" style="left:447px;top:345px;width:68px;height:23px;background:#fff;border-top:2px solid #707070;border-left:2px solid #707070;border-bottom:1px solid #fafafa;"></div>
<div class="a sbtn" style="left:499px;top:347px;width:16px;height:10px;"></div>
<div class="a sbtn" style="left:499px;top:357px;width:16px;height:10px;"></div>
<div class="a tri-up" style="left:504.0px;top:350.0px;"></div>
<div class="a tri-dn" style="left:504.0px;top:360.0px;"></div>
<div class="t" style="left:453px;top:348.78px;font-size:14px;line-height:14px;color:#000;transform:scaleX(0.91);transform-origin:0 0;">0.0</div>
<div class="a" style="left:528px;top:345px;width:77px;height:23px;background:#fff;border-top:2px solid #707070;border-left:2px solid #707070;border-bottom:1px solid #fafafa;"></div>
<div class="a sbtn" style="left:588px;top:347px;width:17px;height:20px;"></div>
<div class="a tri-dn2" style="left:592.0px;top:355.0px;"></div>
<div class="t" style="left:532px;top:348.78px;font-size:14px;line-height:14px;color:#000;transform:scaleX(0.91);transform-origin:0 0;">PEQ</div>
<div class="a chk" style="left:619px;top:350px;width:12px;height:11px;"></div>
<svg class="a" style="left:620px;top:350px" width="11" height="11" viewBox="0 0 11 11"><path d="M2.4 6.2 L4.5 9 L8.8 3.6" stroke="#000" stroke-width="2" fill="none"/></svg>
<div class="t" style="left:637.5px;top:348.58px;font-size:14px;line-height:14px;color:#000;transform:scaleX(0.91);transform-origin:0 0;">Bypass</div>
<div class="t" style="right:817px;top:375.18px;font-size:14px;line-height:14px;color:#000;transform:scaleX(0.91);transform-origin:100% 0;">EQ10</div>
<div class="a" style="left:286px;top:373px;width:68px;height:23px;background:#fff;border-top:2px solid #707070;border-left:2px solid #707070;border-bottom:1px solid #fafafa;"></div>
<div class="a sbtn" style="left:338px;top:375px;width:16px;height:10px;"></div>
<div class="a sbtn" style="left:338px;top:385px;width:16px;height:10px;"></div>
<div class="a tri-up" style="left:343.0px;top:378.0px;"></div>
<div class="a tri-dn" style="left:343.0px;top:388.0px;"></div>
<div class="t" style="left:292px;top:376.78px;font-size:14px;line-height:14px;color:#000;transform:scaleX(0.91);transform-origin:0 0;">15000</div>
<div class="a" style="left:367px;top:373px;width:68px;height:23px;background:#fff;border-top:2px solid #707070;border-left:2px solid #707070;border-bottom:1px solid #fafafa;"></div>
<div class="a sbtn" style="left:419px;top:375px;width:16px;height:10px;"></div>
<div class="a sbtn" style="left:419px;top:385px;width:16px;height:10px;"></div>
<div class="a tri-up" style="left:424.0px;top:378.0px;"></div>
<div class="a tri-dn" style="left:424.0px;top:388.0px;"></div>
<div class="t" style="left:373px;top:376.78px;font-size:14px;line-height:14px;color:#000;transform:scaleX(0.91);transform-origin:0 0;">28.852</div>
<div class="a" style="left:447px;top:373px;width:68px;height:23px;background:#fff;border-top:2px solid #707070;border-left:2px solid #707070;border-bottom:1px solid #fafafa;"></div>
<div class="a sbtn" style="left:499px;top:375px;width:16px;height:10px;"></div>
<div class="a sbtn" style="left:499px;top:385px;width:16px;height:10px;"></div>
<div class="a tri-up" style="left:504.0px;top:378.0px;"></div>
<div class="a tri-dn" style="left:504.0px;top:388.0px;"></div>
<div class="t" style="left:453px;top:376.78px;font-size:14px;line-height:14px;color:#000;transform:scaleX(0.91);transform-origin:0 0;">0.0</div>
<div class="a" style="left:528px;top:373px;width:77px;height:23px;background:#fff;border-top:2px solid #707070;border-left:2px solid #707070;border-bottom:1px solid #fafafa;"></div>
<div class="a sbtn" style="left:588px;top:375px;width:17px;height:20px;"></div>
<div class="a tri-dn2" style="left:592.0px;top:383.0px;"></div>
<div class="t" style="left:532px;top:376.78px;font-size:14px;line-height:14px;color:#000;transform:scaleX(0.91);transform-origin:0 0;">PEQ</div>
<div class="a chk" style="left:619px;top:377px;width:12px;height:11px;"></div>
<svg class="a" style="left:620px;top:377px" width="11" height="11" viewBox="0 0 11 11"><path d="M2.4 6.2 L4.5 9 L8.8 3.6" stroke="#000" stroke-width="2" fill="none"/></svg>
<div class="t" style="left:637.5px;top:375.58px;font-size:14px;line-height:14px;color:#000;transform:scaleX(0.91);transform-origin:0 0;">Bypass</div>
<div class="a btn" style="left:689px;top:189px;width:84px;height:26px;"></div>
<div class="t" style="left:630.8px;width:200px;text-align:center;top:194.28px;font-size:14px;line-height:14px;color:#000;transform:scaleX(0.94);transform-origin:50% 0;">EQ RESET</div>
<div class="a btn" style="left:689px;top:284px;width:84px;height:27px;"></div>
<div class="t" style="left:630px;width:200px;text-align:center;top:289.78px;font-size:14px;line-height:14px;color:#000;transform:scaleX(0.96);transform-origin:50% 0;">EQ BYPASS</div>
<div class="a grp" style="left:800px;top:92px;width:269px;height:142px;"></div>
<div class="a" style="left:805px;top:90px;width:50px;height:5px;background:#f0f0f0;"></div>
<div class="t" style="left:808px;top:84.78px;font-size:14px;line-height:14px;color:#000;transform:scaleX(0.91);transform-origin:0 0;">XOVER</div>
<div class="t" style="left:783px;width:200px;text-align:center;top:119.78px;font-size:14px;line-height:14px;color:#000;transform:scaleX(0.91);transform-origin:50% 0;">Freq</div>
<div class="t" style="left:894px;width:200px;text-align:center;top:119.78px;font-size:14px;line-height:14px;color:#000;transform:scaleX(0.91);transform-origin:50% 0;">Type</div>
<div class="t" style="left:809.5px;top:145.28px;font-size:14px;line-height:14px;color:#000;transform:scaleX(0.91);transform-origin:0 0;">HPF</div>
<div class="t" style="left:809.5px;top:191.28px;font-size:14px;line-height:14px;color:#000;transform:scaleX(0.91);transform-origin:0 0;">LPF</div>
<div class="a" style="left:848px;top:139px;width:84px;height:22px;background:#fff;border-top:2px solid #707070;border-left:2px solid #707070;border-bottom:1px solid #fafafa;"></div>
<div class="a sbtn" style="left:916px;top:141px;width:16px;height:9px;"></div>
<div class="a sbtn" style="left:916px;top:150px;width:16px;height:10px;"></div>
<div class="a tri-up" style="left:921.0px;top:143.5px;"></div>
<div class="a tri-dn" style="left:921.0px;top:153.0px;"></div>
<div class="t" style="left:854px;top:142.88px;font-size:14px;line-height:14px;color:#000;transform:scaleX(0.91);transform-origin:0 0;">OFF</div>
<div class="a" style="left:944px;top:139px;width:115px;height:22px;background:#fff;border-top:2px solid #707070;border-left:2px solid #707070;border-bottom:1px solid #fafafa;"></div>
<div class="a sbtn" style="left:1042px;top:141px;width:17px;height:19px;"></div>
<div class="a tri-dn2" style="left:1046.0px;top:148.5px;"></div>
<div class="t" style="left:948px;top:143.28px;font-size:14px;line-height:14px;color:#000;transform:scaleX(0.91);transform-origin:0 0;">Lin-Ril 12dB</div>
<div class="a" style="left:848px;top:187px;width:84px;height:22px;background:#fff;border-top:2px solid #707070;border-left:2px solid #707070;border-bottom:1px solid #fafafa;"></div>
<div class="a sbtn" style="left:916px;top:189px;width:16px;height:9px;"></div>
<div class="a sbtn" style="left:916px;top:198px;width:16px;height:10px;"></div>
<div class="a tri-up" style="left:921.0px;top:191.5px;"></div>
<div class="a tri-dn" style="left:921.0px;top:201.0px;"></div>
<div class="t" style="left:854px;top:190.88px;font-size:14px;line-height:14px;color:#000;transform:scaleX(0.91);transform-origin:0 0;">OFF</div>
<div class="a" style="left:944px;top:187px;width:115px;height:22px;background:#fff;border-top:2px solid #707070;border-left:2px solid #707070;border-bottom:1px solid #fafafa;"></div>
<div class="a sbtn" style="left:1042px;top:189px;width:17px;height:19px;"></div>
<div class="a tri-dn2" style="left:1046.0px;top:196.5px;"></div>
<div class="t" style="left:948px;top:191.28px;font-size:14px;line-height:14px;color:#000;transform:scaleX(0.91);transform-origin:0 0;">Lin-Ril 12dB</div>
<div class="a grp" style="left:800px;top:254px;width:269px;height:149px;"></div>
<div class="a" style="left:805.5px;top:252px;width:99px;height:5px;background:#f0f0f0;"></div>
<div class="t" style="left:808.5px;top:246.78px;font-size:14px;line-height:14px;color:#000;transform:scaleX(0.91);transform-origin:0 0;">COMPRESSOR</div>
<div class="t" style="right:223px;top:273.28px;font-size:14px;line-height:14px;color:#000;transform:scaleX(0.91);transform-origin:100% 0;">Threshold</div>
<div class="t" style="right:225px;top:302.78px;font-size:14px;line-height:14px;color:#000;transform:scaleX(0.91);transform-origin:100% 0;">Attack</div>
<div class="t" style="right:223.5px;top:338.78px;font-size:14px;line-height:14px;color:#000;transform:scaleX(0.91);transform-origin:100% 0;">Release</div>
<div class="t" style="right:232px;top:371.28px;font-size:14px;line-height:14px;color:#000;transform:scaleX(0.91);transform-origin:100% 0;">Ratio</div>
<div class="a" style="left:887px;top:269px;width:77px;height:22px;background:#fff;border-top:2px solid #707070;border-left:2px solid #707070;border-bottom:1px solid #fafafa;"></div>
<div class="a sbtn" style="left:948px;top:271px;width:16px;height:9px;"></div>
<div class="a sbtn" style="left:948px;top:280px;width:16px;height:10px;"></div>
<div class="a tri-up" style="left:953.0px;top:273.5px;"></div>
<div class="a tri-dn" style="left:953.0px;top:283.0px;"></div>
<div class="t" style="left:893px;top:272.28px;font-size:14px;line-height:14px;color:#000;transform:scaleX(0.91);transform-origin:0 0;">20dBu</div>
<div class="a" style="left:887px;top:303px;width:77px;height:22px;background:#fff;border-top:2px solid #707070;border-left:2px solid #707070;border-bottom:1px solid #fafafa;"></div>
<div class="a sbtn" style="left:948px;top:305px;width:16px;height:9px;"></div>
<div class="a sbtn" style="left:948px;top:314px;width:16px;height:10px;"></div>
<div class="a tri-up" style="left:953.0px;top:307.5px;"></div>
<div class="a tri-dn" style="left:953.0px;top:317.0px;"></div>
<div class="t" style="left:893px;top:306.28px;font-size:14px;line-height:14px;color:#000;transform:scaleX(0.91);transform-origin:0 0;">3ms</div>
<div class="a" style="left:887px;top:337px;width:77px;height:22px;background:#f0f0f0;border-top:2px solid #707070;border-left:2px solid #707070;border-bottom:1px solid #fafafa;"></div>
<div class="a sbtn" style="left:948px;top:339px;width:16px;height:9px;"></div>
<div class="a sbtn" style="left:948px;top:348px;width:16px;height:10px;"></div>
<div class="a tri-up" style="left:953.0px;top:341.5px;"></div>
<div class="a tri-dn" style="left:953.0px;top:351.0px;"></div>
<div class="t" style="left:893px;top:340.28px;font-size:14px;line-height:14px;color:#000;transform:scaleX(0.91);transform-origin:0 0;">Atkx2</div>
<div class="a" style="left:887px;top:369px;width:77px;height:22px;background:#f0f0f0;border-top:2px solid #707070;border-left:2px solid #707070;border-bottom:1px solid #fafafa;"></div>
<div class="a sbtn" style="left:948px;top:371px;width:16px;height:9px;"></div>
<div class="a sbtn" style="left:948px;top:380px;width:16px;height:10px;"></div>
<div class="a tri-up" style="left:953.0px;top:373.5px;"></div>
<div class="a tri-dn" style="left:953.0px;top:383.0px;"></div>
<div class="t" style="left:893px;top:372.28px;font-size:14px;line-height:14px;color:#000;transform:scaleX(0.91);transform-origin:0 0;">1:1</div>
<div class="a" style="left:6px;top:414px;width:1077px;height:314px;background:#000;border-left:2px solid #777;border-top:2px solid #606060;"></div>
<svg class="a" style="left:0;top:0" width="1091" height="728" viewBox="0 0 1091 728" shape-rendering="crispEdges">
<rect x="43" y="426" width="1" height="302" fill="#5c5c5c"/>
<rect x="102" y="426" width="1" height="302" fill="#5c5c5c"/>
<rect x="145" y="426" width="1" height="302" fill="#5c5c5c"/>
<rect x="178" y="426" width="1" height="302" fill="#5c5c5c"/>
<rect x="205" y="426" width="1" height="302" fill="#5c5c5c"/>
<rect x="228" y="426" width="1" height="302" fill="#5c5c5c"/>
<rect x="247" y="426" width="1" height="302" fill="#5c5c5c"/>
<rect x="265" y="426" width="1" height="302" fill="#5c5c5c"/>
<rect x="280" y="426" width="1" height="302" fill="#5c5c5c"/>
<rect x="383" y="426" width="1" height="302" fill="#5c5c5c"/>
<rect x="442" y="426" width="1" height="302" fill="#5c5c5c"/>
<rect x="485" y="426" width="1" height="302" fill="#5c5c5c"/>
<rect x="518" y="426" width="1" height="302" fill="#5c5c5c"/>
<rect x="545" y="426" width="1" height="302" fill="#5c5c5c"/>
<rect x="567" y="426" width="1" height="302" fill="#5c5c5c"/>
<rect x="587" y="426" width="1" height="302" fill="#5c5c5c"/>
<rect x="605" y="426" width="1" height="302" fill="#5c5c5c"/>
<rect x="620" y="426" width="1" height="302" fill="#5c5c5c"/>
<rect x="723" y="426" width="1" height="302" fill="#5c5c5c"/>
<rect x="782" y="426" width="1" height="302" fill="#5c5c5c"/>
<rect x="825" y="426" width="1" height="302" fill="#5c5c5c"/>
<rect x="858" y="426" width="1" height="302" fill="#5c5c5c"/>
<rect x="885" y="426" width="1" height="302" fill="#5c5c5c"/>
<rect x="908" y="426" width="1" height="302" fill="#5c5c5c"/>
<rect x="927" y="426" width="1" height="302" fill="#5c5c5c"/>
<rect x="945" y="426" width="1" height="302" fill="#5c5c5c"/>
<rect x="960" y="426" width="1" height="302" fill="#5c5c5c"/>
<rect x="1063" y="426" width="1" height="302" fill="#5c5c5c"/>
<rect x="43" y="426" width="1021" height="1" fill="#5c5c5c"/>
<rect x="43" y="464" width="1021" height="1" fill="#5c5c5c"/>
<rect x="43" y="502" width="1021" height="1" fill="#5c5c5c"/>
<rect x="43" y="541" width="1021" height="1" fill="#5c5c5c"/>
<rect x="43" y="579" width="1021" height="1" fill="#5c5c5c"/>
<rect x="43" y="617" width="1021" height="1" fill="#5c5c5c"/>
<rect x="43" y="655" width="1021" height="1" fill="#5c5c5c"/>
<rect x="43" y="693" width="1021" height="1" fill="#5c5c5c"/>
<rect x="43" y="576" width="1021" height="1" fill="#1a0204"/>
<rect x="43" y="577" width="1021" height="1" fill="#4a0a10"/>
<rect x="43" y="578" width="1021" height="2" fill="#a83442"/>
<rect x="43" y="580" width="1021" height="1" fill="#6a1018"/>
<rect x="43" y="581" width="1021" height="1" fill="#300006"/>
</svg>
<div class="t" style="left:14px;top:420.80px;font-size:14px;line-height:14px;color:#a4a4a4;-webkit-text-stroke:0.5px #a4a4a4;transform:scale(0.97,1.07);transform-origin:0 0;">+20</div>
<div class="t" style="left:14px;top:495.30px;font-size:14px;line-height:14px;color:#a4a4a4;-webkit-text-stroke:0.5px #a4a4a4;transform:scale(0.97,1.07);transform-origin:0 0;">+10</div>
<div class="t" style="left:14.5px;top:570.80px;font-size:14px;line-height:14px;color:#a4a4a4;-webkit-text-stroke:0.5px #a4a4a4;transform:scale(0.97,1.07);transform-origin:0 0;">0dB</div>
<div class="t" style="left:12.5px;top:648.80px;font-size:14px;line-height:14px;color:#a4a4a4;-webkit-text-stroke:0.5px #a4a4a4;transform:scale(0.97,1.07);transform-origin:0 0;">-10</div>
<div class="t" style="left:13px;top:722.00px;font-size:14px;line-height:14px;color:#a4a4a4;-webkit-text-stroke:0.5px #a4a4a4;transform:scale(0.97,1.07);transform-origin:0 0;">-20</div>
<div class="t" style="left:2.071028078931633px;width:200px;text-align:center;top:571.78px;font-size:14px;line-height:14px;color:#fff;transform:scaleX(1.0);transform-origin:50% 0;-webkit-text-stroke:0.25px #fff;">1</div>
<div class="t" style="left:77.49960294849276px;width:200px;text-align:center;top:571.78px;font-size:14px;line-height:14px;color:#fff;transform:scaleX(1.0);transform-origin:50% 0;-webkit-text-stroke:0.25px #fff;">2</div>
<div class="t" style="left:179.84980147424636px;width:200px;text-align:center;top:571.78px;font-size:14px;line-height:14px;color:#fff;transform:scaleX(1.0);transform-origin:50% 0;-webkit-text-stroke:0.25px #fff;">3</div>
<div class="t" style="left:282.2px;width:200px;text-align:center;top:571.78px;font-size:14px;line-height:14px;color:#fff;transform:scaleX(1.0);transform-origin:50% 0;-webkit-text-stroke:0.25px #fff;">4</div>
<div class="t" style="left:417.4996029484928px;width:200px;text-align:center;top:571.78px;font-size:14px;line-height:14px;color:#fff;transform:scaleX(1.0);transform-origin:50% 0;-webkit-text-stroke:0.25px #fff;">5</div>
<div class="t" style="left:519.8498014742464px;width:200px;text-align:center;top:571.78px;font-size:14px;line-height:14px;color:#fff;transform:scaleX(1.0);transform-origin:50% 0;-webkit-text-stroke:0.25px #fff;">6</div>
<div class="t" style="left:622.2px;width:200px;text-align:center;top:571.78px;font-size:14px;line-height:14px;color:#fff;transform:scaleX(1.0);transform-origin:50% 0;-webkit-text-stroke:0.25px #fff;">7</div>
<div class="t" style="left:757.4996029484928px;width:200px;text-align:center;top:571.78px;font-size:14px;line-height:14px;color:#fff;transform:scaleX(1.0);transform-origin:50% 0;-webkit-text-stroke:0.25px #fff;">8</div>
<div class="t" style="left:859.8498014742464px;width:200px;text-align:center;top:571.78px;font-size:14px;line-height:14px;color:#fff;transform:scaleX(1.0);transform-origin:50% 0;-webkit-text-stroke:0.25px #fff;">9</div>
<div class="t" style="left:919.7208295531781px;width:200px;text-align:center;top:571.78px;font-size:14px;line-height:14px;color:#fff;transform:scaleX(1.0);transform-origin:50% 0;-webkit-text-stroke:0.25px #fff;">10</div>
<div class="t" style="left:41.5px;top:655.78px;font-size:14px;line-height:14px;color:#fff;transform:scaleX(0.95);transform-origin:0 0;-webkit-text-stroke:0.25px #fff;">H</div>
<div class="t" style="left:942.5px;top:651.53px;font-size:20px;line-height:20px;color:rgba(150,150,150,0.75);transform-origin:0 0;">Activate Windows</div>
<div class="t" style="left:942.5px;top:676.65px;font-size:14.8px;line-height:14.8px;color:rgba(150,150,150,0.75);transform-origin:0 0;">Go to Settings to activate Windows.</div>
<div class="t" style="left:1056px;top:678.78px;font-size:14px;line-height:14px;color:#fff;transform:scaleX(0.95);transform-origin:0 0;-webkit-text-stroke:0.35px #fff;">L</div>
</body></html>
